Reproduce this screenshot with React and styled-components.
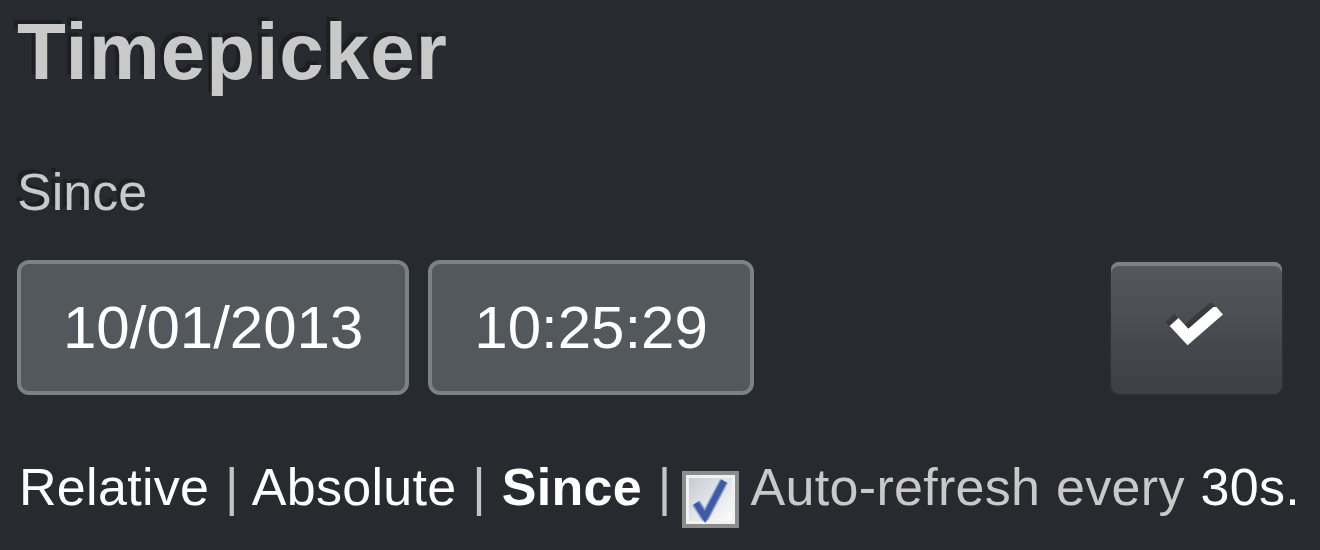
import React from "react";
import styled, { createGlobalStyle } from "styled-components";

const Global = createGlobalStyle`
  html, body { margin: 0; padding: 0; background: #272a2f; }
  body { font-family: "Liberation Sans", Arial, sans-serif; }
`;

const Page = styled.div`
  width: 1320px;
  height: 550px;
  box-sizing: border-box;
  padding: 12px 0 0 17px;
  background: #272a2f;
  overflow: hidden;
`;

const Title = styled.h1`
  margin: 0;
  font-size: 80px;
  line-height: 80px;
  font-weight: 700;
  letter-spacing: 1px;
  color: #c9c9c9;
  text-shadow: -4px -4px 0 rgba(0, 0, 0, 0.25);
`;

const Label = styled.div`
  margin-top: 74px;
  font-size: 52px;
  line-height: 52px;
  color: #c9c9c9;
  text-shadow: -4px -4px 0 rgba(0, 0, 0, 0.25);
`;

const Row = styled.div`
  margin-top: 42px;
  display: flex;
  align-items: flex-start;
  gap: 19px;
  padding-right: 38px;
`;

const Field = styled.div`
  height: 135px;
  box-sizing: border-box;
  display: flex;
  align-items: center;
  padding: 0 42px;
  background: #53585d;
  border: 4px solid #7b8287;
  border-radius: 12px;
  color: #ffffff;
  font-size: 60px;
  line-height: 60px;
`;

const Button = styled.button`
  margin-left: auto;
  margin-top: 2px;
  width: 171px;
  height: 132px;
  box-sizing: border-box;
  display: flex;
  align-items: center;
  justify-content: center;
  border: none;
  border-radius: 8px;
  background: linear-gradient(#55595e, #3c4044);
  box-shadow: inset 0 4px 0 #7d8287, 0 0 0 2px #2b2e33;
  padding: 0;
  svg {
    filter: drop-shadow(-4px -4px 0 rgba(0, 0, 0, 0.25));
  }
`;

const Links = styled.div`
  margin-top: 66px;
  margin-left: 2px;
  font-size: 52px;
  line-height: 52px;
  letter-spacing: 0.3px;
  word-spacing: 1px;
  color: #ffffff;
  white-space: nowrap;
`;

const Link = styled.span`
  color: #ffffff;
  font-weight: ${(p) => (p.$active ? 700 : 400)};
`;

const Sep = styled.span`
  color: #c4c4c4;
`;

const Muted = styled.span`
  color: #c9c9c9;
`;

const Box = styled.span`
  display: inline-block;
  width: 57px;
  height: 57px;
  box-sizing: border-box;
  margin: 0 12px 0 10px;
  vertical-align: -23px;
  border: 4px solid #8c8c8c;
  background: linear-gradient(135deg, #c3c7cf 0%, #dfe2e7 45%, #ffffff 100%);
  box-shadow: inset 0 0 0 3px #f2f2f2;
  position: relative;
  svg {
    position: absolute;
    left: 0;
    top: 0;
  }
`;

export default function App() {
  return (
    <>
      <Global />
      <Page>
        <Title>Timepicker</Title>
        <Label>Since</Label>
        <Row>
          <Field>10/01/2013</Field>
          <Field>10:25:29</Field>
          <Button aria-label="apply">
            <svg width="56" height="42" viewBox="0 0 56 42">
              <polyline
                points="5,15 19,30 50,3"
                fill="none"
                stroke="#ffffff"
                strokeWidth="12"
                strokeLinecap="butt"
                strokeLinejoin="miter"
              />
            </svg>
          </Button>
        </Row>
        <Links>
          <Link>Relative</Link> <Sep>|</Sep> <Link>Absolute</Link> <Sep>|</Sep>{" "}
          <Link $active>Since</Link> <Sep>|</Sep>
          <Box>
            <svg width="49" height="49" viewBox="0 0 49 49">
              <polyline
                points="10,28 19,42 38,6"
                fill="none"
                stroke="#8ea0cc"
                strokeWidth="9"
                strokeLinejoin="round"
              />
              <polyline
                points="10,28 19,42 38,6"
                fill="none"
                stroke="#3f5ba6"
                strokeWidth="6"
                strokeLinejoin="miter"
              />
            </svg>
          </Box>
          <Muted>Auto-refresh every </Muted>
          <Link>30s.</Link>
        </Links>
      </Page>
    </>
  );
}
